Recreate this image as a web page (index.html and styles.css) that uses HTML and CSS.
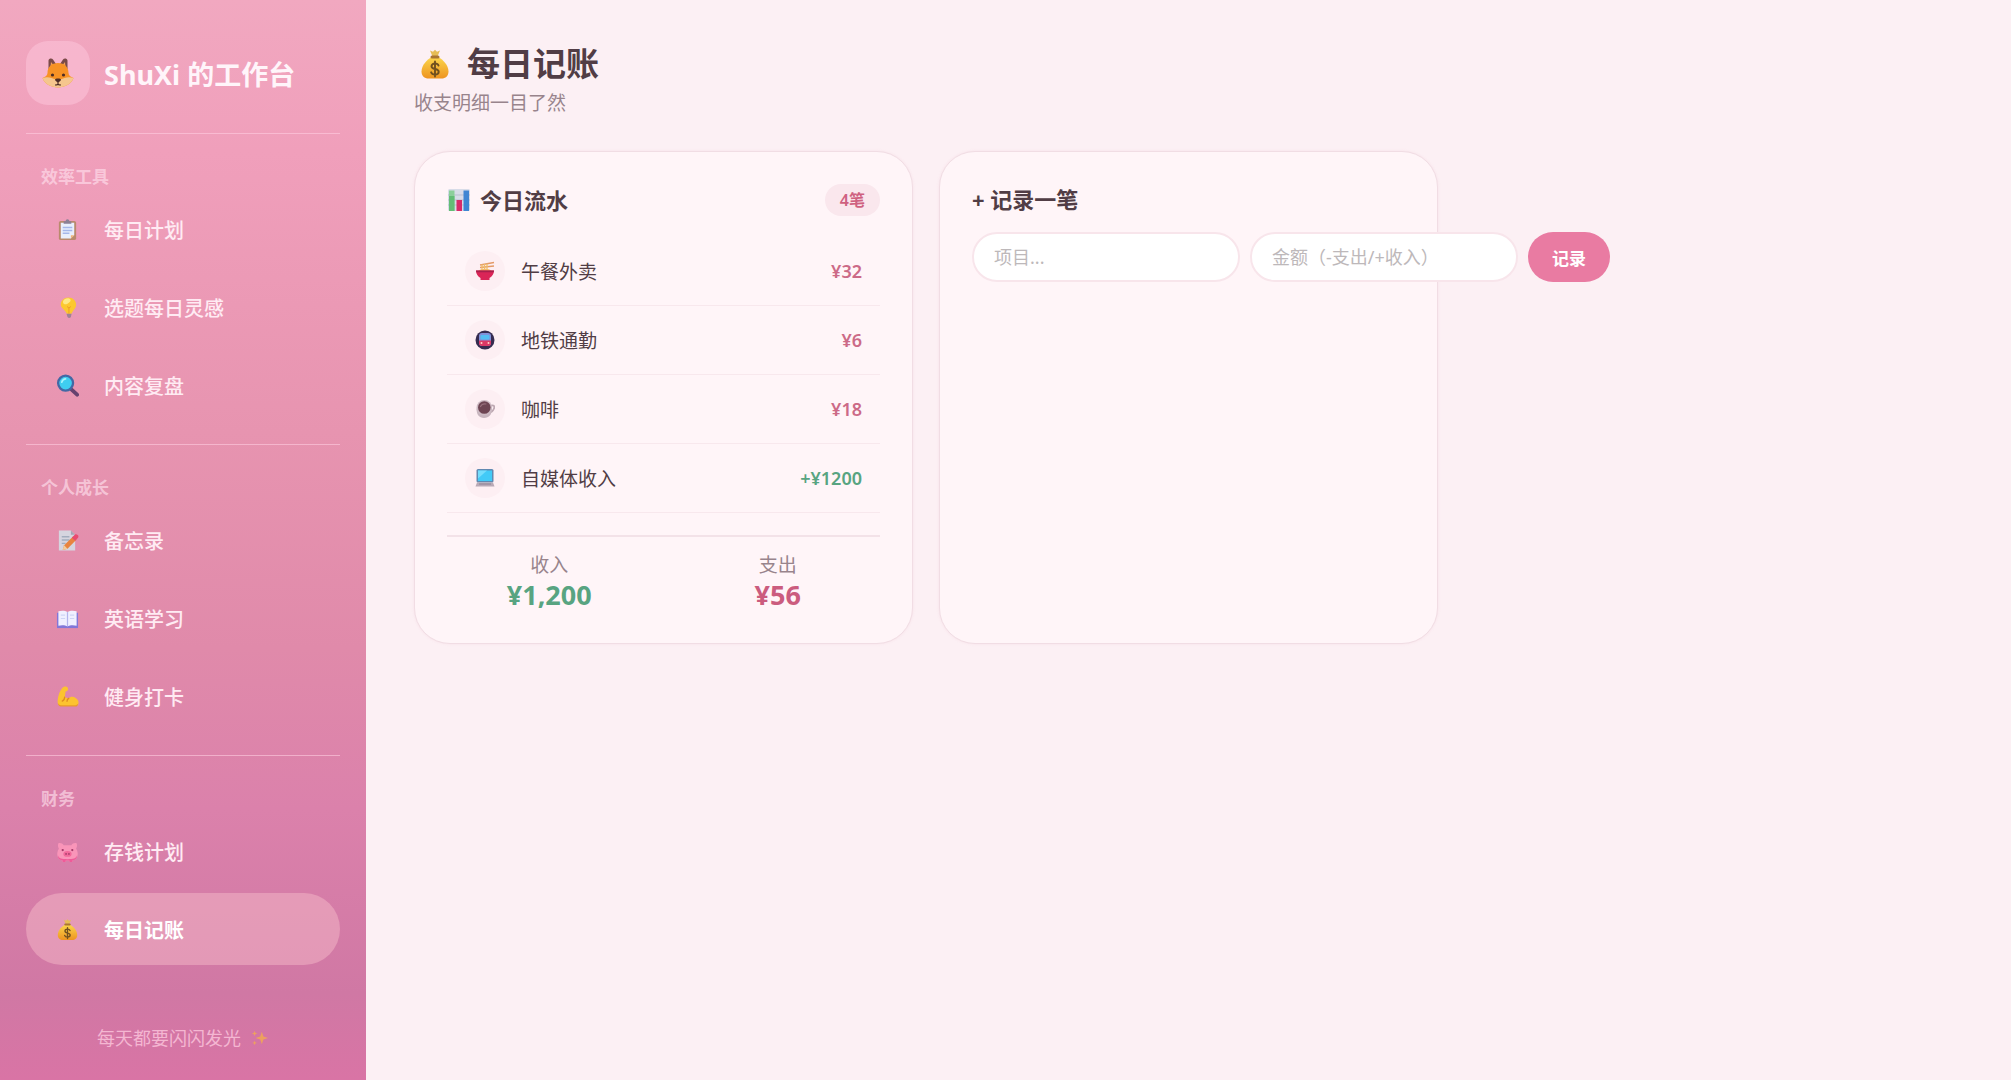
FILE: index.html
```html
<!DOCTYPE html>
<html lang="zh-CN">
<head>
  <meta charset="UTF-8">
  <meta name="viewport" content="width=device-width, initial-scale=1.0">
  <title>ShuXi 的工作台</title>
  <link rel="stylesheet" href="styles.css">
</head>
<body>

  <!-- Shared icon -->
  <svg class="sprite" width="0" height="0" aria-hidden="true">
    <defs>
      <linearGradient id="gold" x1="0" y1="0" x2="0" y2="1">
        <stop offset="0" stop-color="#fbd64c"/>
        <stop offset="1" stop-color="#ee9420"/>
      </linearGradient>
    </defs>
    <symbol id="moneybag" viewBox="0 0 32 32">
      <path d="M11 2.500l3 1.300 2-2 2 2 3-1.300-2.500 6h-5z" fill="#e6bd55"/>
      <path d="M12.500 9C8 12 2.500 17 2.500 23.500c0 4.500 3 7 7 7h13c4 0 7-2.500 7-7C29.500 17 24 12 19.500 9z" fill="url(#gold)"/>
      <rect x="11.500" y="7.500" width="9" height="3" rx="1.500" fill="#a87532"/>
      <path d="M19.500 17.500c-.5-1.500-1.800-2-3.500-2-2 0-3.500 1-3.500 2.700 0 4 7.200 1.600 7.200 5.600 0 1.800-1.600 2.800-3.700 2.800-2 0-3.400-.8-3.900-2.300M16 13.500v15" fill="none" stroke="#70501f" stroke-width="1.900" stroke-linecap="round"/>
    </symbol>
  </svg>

  <div class="layout">

    <!-- Sidebar -->
    <aside class="sidebar">
      <div class="brand">
        <div class="brand-logo">
          <svg viewBox="0 0 32 32" width="32" height="32" aria-hidden="true">
            <path d="M6.500 12L6.500 3.500C7 1 10 1 11 2.500l4 6zM25.500 12L25.500 3.500C25 1 22 1 21 2.500l-4 6z" fill="#7a4a48"/>
            <path d="M8.500 10l.5-5 3.200 4zM23.500 10l-.5-5-3.200 4z" fill="#f2a05c"/>
            <path d="M16 6c6.500 0 10.500 4 10.500 10 0 2 2 4 5 5-2 6-9 9.500-15.500 9.500S2.500 27 .5 21c3-1 5-3 5-5 0-6 4-10 10.500-10z" fill="#f79225"/>
            <path d="M.5 21c3-1 6-1 9 0 3 1 4.500 1.500 6.500 1.500s3.500-.5 6.500-1.500c3-1 6-1 9 0-2 6-9 9.500-15.500 9.500S2.500 27 .5 21z" fill="#f5c68e"/>
            <circle cx="10.500" cy="18" r="1.600" fill="#4d2c25"/>
            <circle cx="21.500" cy="18" r="1.600" fill="#4d2c25"/>
            <path d="M13 22.500c0-1.500 6-1.500 6 0 0 1.300-1.800 2.700-3 2.700s-3-1.400-3-2.700z" fill="#4d2c25"/>
            <path d="M16 25v2m-3 1c1.500 0 3-.4 3-1.300 0 .9 1.500 1.300 3 1.300" fill="none" stroke="#4d2c25" stroke-width="1.200"/>
          </svg>
        </div>
        <span class="brand-name">ShuXi 的工作台</span>
      </div>

      <nav>
        <div class="nav-section">
          <div class="nav-label">效率工具</div>
          <a href="#" class="nav-item">
            <svg class="nav-icon" viewBox="0 0 24 24" aria-hidden="true">
              <rect x="3" y="3" width="18" height="20" rx="2" fill="#b98a6c"/>
              <path d="M5 5h14v13l-3.500 3.500H5z" fill="#e9effc"/>
              <path d="M19 18h-3.500v3.500z" fill="#f0b375"/>
              <path d="M7 10h10M7 13h10M7 16h7" stroke="#a5b7ea" stroke-width="1.500"/>
              <path d="M8 6V3.500h2c0-3 4-3 4 0h2V6z" fill="#8b8095"/>
            </svg>
            每日计划
          </a>
          <a href="#" class="nav-item">
            <svg class="nav-icon" viewBox="0 0 24 24" aria-hidden="true">
              <path d="M13 1.500c4.800 0 8 3.400 8 7.600 0 3.600-2.800 5-4.800 9.400h-4.900C9.500 14 5 12.500 5 9c0-4.200 3.300-7.500 8-7.500z" fill="#fcc82f"/>
              <path d="M9 3.500c2-1.500 5-1.300 6 .2s-1 3.300-3 4.300-4 .5-4.500-.8S7.500 4.600 9 3.500z" fill="#fee886"/>
              <path d="M11 18.500h5.300l-.8 3.500c-.8 1.300-2.700 1.300-3.500 0z" fill="#a18294"/>
              <path d="M11.500 11l2 1.500 2-1.500M13.500 12.500v6" fill="none" stroke="#ee9c25" stroke-width="1"/>
            </svg>
            选题每日灵感
          </a>
          <a href="#" class="nav-item">
            <svg class="nav-icon" viewBox="0 0 24 24" aria-hidden="true">
              <path d="M16 16l6 5.500" stroke="#67416f" stroke-width="4" stroke-linecap="round"/>
              <circle cx="10" cy="9.500" r="7.800" fill="#3fcdf0" stroke="#4368a4" stroke-width="2.400"/>
              <path d="M6 8.500c.6-2 2-3.200 4-3.400" fill="none" stroke="#a8f3fc" stroke-width="1.700" stroke-linecap="round"/>
            </svg>
            内容复盘
          </a>
        </div>

        <div class="nav-section">
          <div class="nav-label">个人成长</div>
          <a href="#" class="nav-item">
            <svg class="nav-icon" viewBox="0 0 24 24" aria-hidden="true">
              <path d="M3 1.500h12.500L20 6v16.500H3z" fill="#d6d5df"/>
              <path d="M15.500 1.500V6H20z" fill="#a7a5b5"/>
              <path d="M6 8h8M6 11.500h8M6 15h4" stroke="#a3adbe" stroke-width="1.500"/>
              <path d="M7 22l1.500-5L18 7.500l3.500 3.500-9.500 9.500z" fill="#e8843f"/>
              <path d="M16.500 9l3-3c2-1.500 5 1 3.500 3l-3 3.200z" fill="#e94b70"/>
              <path d="M7 22l1.500-5 3.500 3.500z" fill="#f2ce9d"/>
            </svg>
            备忘录
          </a>
          <a href="#" class="nav-item">
            <svg class="nav-icon" viewBox="0 0 24 24" aria-hidden="true">
              <path d="M1 6h22v16H1z" fill="#8277d8"/>
              <path d="M2.500 4.500c3-1 7-1 9.500.8 2.500-1.800 6.500-1.800 9.500-.8v15c-3-.8-7-.8-9.500.7-2.500-1.500-6.500-1.500-9.500-.7z" fill="#f0f0ff"/>
              <path d="M12 5.300v14.900" stroke="#b2b4ec" stroke-width="1.300"/>
              <path d="M5 8.500h4.500M5 12h4.500M14.500 8.500H19M14.500 12H19" stroke="#ced5f6" stroke-width="1.200"/>
            </svg>
            英语学习
          </a>
          <a href="#" class="nav-item">
            <svg class="nav-icon" viewBox="0 0 24 24" aria-hidden="true">
              <path d="M7 2.500C9 1 12 1.700 12.500 3.500c.4 1.700-.7 3-2.500 3.200l-.8 5.800c1.500.8 3 1.500 4 1.500 2.500-3.500 8.300-1.500 10 2.500 1 3-.3 5.500-3.200 5.500H6c-3 0-4.500-2-4.300-4.800C2 11.500 4 5.500 7 2.500z" fill="#fcc32f"/>
              <path d="M9 12.800c0 2-1 3.400-2.500 4M13.200 14c-1.200.8-1.700 1.800-1.700 3" fill="none" stroke="#e08b22" stroke-width="1.400" stroke-linecap="round"/>
              <path d="M2 19c1 2 3 2 5 2h12c2 0 3.500-.5 4.200-1.800 0 2-1.300 3.300-3.200 3.300H6c-2.300 0-3.800-1.300-4-3.500z" fill="#e99a2b"/>
            </svg>
            健身打卡
          </a>
        </div>

        <div class="nav-section">
          <div class="nav-label">财务</div>
          <a href="#" class="nav-item">
            <svg class="nav-icon" viewBox="0 0 24 24" aria-hidden="true">
              <path d="M2.500 3.500C4 2.500 7 3.500 8 5.500h8c1-2 4-3 5.500-2 .8 2 .5 4-.5 5.500 1.500 2 2 5 1.500 7.500-.6 3-3 4.800-5.500 5V23h-3v-1.500h-4V23H7v-1.500c-3-.4-5-2.300-5.500-5-.5-2.500 0-5.500 1.500-7.500-1-1.500-1.300-3.500-.5-5.500z" fill="#f995b9"/>
              <path d="M2 16c1 3.500 4 4 10 4s9-.5 10-4c.2 3.500-2 5.200-5 5.500V23h-3v-1.500h-4V23H7v-1.500c-3-.3-5.200-2-5-5.500z" fill="#ef5b99"/>
              <ellipse cx="12" cy="14.500" rx="4.300" ry="3.100" fill="#f2689b"/>
              <circle cx="10.500" cy="14.500" r=".9" fill="#a33a68"/>
              <circle cx="13.500" cy="14.500" r=".9" fill="#a33a68"/>
              <circle cx="7" cy="10.500" r="1.200" fill="#a33a68"/>
              <circle cx="17" cy="10.500" r="1.200" fill="#a33a68"/>
            </svg>
            存钱计划
          </a>
          <a href="#" class="nav-item active" aria-current="page">
            <svg class="nav-icon" aria-hidden="true"><use href="#moneybag"/></svg>
            每日记账
          </a>
        </div>
      </nav>

      <div class="sidebar-footer">
        每天都要闪闪发光
        <svg viewBox="0 0 20 20" width="18" height="18" aria-hidden="true">
          <path d="M12 3l1.800 5.200L19 10l-5.200 1.800L12 17l-1.800-5.200L5 10l5.200-1.800zM4 2l.8 2.200L7 5l-2.200.8L4 8l-.8-2.200L1 5l2.200-.8zM4 13l.7 1.800 1.800.7-1.800.7L4 18l-.7-1.800-1.800-.7 1.800-.7z" fill="#eda05f"/>
        </svg>
      </div>
    </aside>

    <!-- Main content -->
    <main class="main">
      <header class="page-header">
        <h1>
          <svg class="title-icon" aria-hidden="true"><use href="#moneybag"/></svg>
          每日记账
        </h1>
        <p>收支明细一目了然</p>
      </header>

      <div class="card-grid">
        <section class="card">
          <div class="card-header">
            <h2>
              <svg viewBox="0 0 24 24" width="24" height="24" aria-hidden="true">
                <rect x="1" y="1" width="22" height="22" rx="1.500" fill="#d8dce8"/>
                <path d="M1 7h22M1 12h22M1 17h22" stroke="#b9bfd0" stroke-width="1"/>
                <rect x="2" y="2.500" width="5.500" height="20.500" fill="#8ccf9b"/>
                <rect x="2" y="8" width="5.500" height="15" fill="#63bd76"/>
                <rect x="9.500" y="12" width="5.500" height="11" fill="#d92b68"/>
                <rect x="16.500" y="2.500" width="5.500" height="20.500" fill="#3f86d3"/>
              </svg>
              今日流水
            </h2>
            <span class="badge">4笔</span>
          </div>

          <ul class="record-list">
            <li>
              <span class="record-icon">
                <svg viewBox="0 0 20 20" width="20" height="20" aria-hidden="true">
                  <path d="M5 4l14-2.500M5 6.500L19 5" stroke="#e39a68" stroke-width="1.300"/>
                  <path d="M7 3.500v7M9.500 3v7M12 2.800v7" stroke="#f1bf68" stroke-width="1.300"/>
                  <path d="M3.500 10c2-3 11-3 13 0z" fill="#f3bb6b"/>
                  <path d="M1 9.500h18c0 3.500-2 6-4.500 7.500v2h-9v-2C3 15.500 1 13 1 9.500z" fill="#da2557"/>
                  <path d="M1 9.500h18l-.2 1.700H1.200z" fill="#a8204c"/>
                </svg>
              </span>
              <span class="record-name">午餐外卖</span>
              <span class="amount">¥32</span>
            </li>
            <li>
              <span class="record-icon">
                <svg viewBox="0 0 20 20" width="20" height="20" aria-hidden="true">
                  <circle cx="10" cy="10" r="9.500" fill="#352b50"/>
                  <rect x="4" y="3" width="12" height="13" rx="3" fill="#8290d8"/>
                  <rect x="5.500" y="5" width="9" height="4.500" rx="1" fill="#54bdf3"/>
                  <path d="M4 10.500h12V13c0 2-1 3-3 3H7c-2 0-3-1-3-3z" fill="#da3865"/>
                  <circle cx="6.500" cy="13" r="1" fill="#ffd3c8"/>
                  <circle cx="13.500" cy="13" r="1" fill="#ffd3c8"/>
                </svg>
              </span>
              <span class="record-name">地铁通勤</span>
              <span class="amount">¥6</span>
            </li>
            <li>
              <span class="record-icon">
                <svg viewBox="0 0 20 20" width="20" height="20" aria-hidden="true">
                  <path d="M15.500 7c3-1.500 4.500 0 3.500 2.500s-3 4-5 4" fill="none" stroke="#bda8b2" stroke-width="1.800"/>
                  <path d="M1.500 9.500c0 6 2.500 9.500 7.500 9.500s8-3.500 8-9.500z" fill="#c7b5be"/>
                  <circle cx="9.300" cy="8.800" r="7.800" fill="#cdbbc4"/>
                  <circle cx="9.300" cy="8.500" r="6.300" fill="#6d4553"/>
                  <path d="M5.500 7.500c1-2 3-3 5.500-2.500" fill="none" stroke="#96707c" stroke-width="1.200" stroke-linecap="round"/>
                </svg>
              </span>
              <span class="record-name">咖啡</span>
              <span class="amount">¥18</span>
            </li>
            <li>
              <span class="record-icon">
                <svg viewBox="0 0 20 20" width="20" height="20" aria-hidden="true">
                  <rect x="1.500" y="1" width="17" height="13.500" rx="1.500" fill="#6189b1"/>
                  <rect x="3" y="2.500" width="14" height="10.500" fill="#42caf7"/>
                  <path d="M3 2.500h9l-9 8z" fill="#75ddfc"/>
                  <path d="M2 14.500h16l1.500 4H.5z" fill="#b8a9b6"/>
                  <path d="M4 16h12" stroke="#8c8295" stroke-width="1"/>
                </svg>
              </span>
              <span class="record-name">自媒体收入</span>
              <span class="amount income">+¥1200</span>
            </li>
          </ul>

          <div class="summary">
            <div>
              <div class="summary-label">收入</div>
              <div class="summary-value income">¥1,200</div>
            </div>
            <div>
              <div class="summary-label">支出</div>
              <div class="summary-value">¥56</div>
            </div>
          </div>
        </section>

        <section class="card">
          <h2 class="form-title">+ 记录一笔</h2>
          <form class="record-form">
            <input type="text" aria-label="项目" placeholder="项目...">
            <input type="text" aria-label="金额" placeholder="金额（-支出/+收入）">
            <button type="button">记录</button>
          </form>
        </section>
      </div>
    </main>

  </div>

</body>
</html>
```
FILE: styles.css
```css
* {
  box-sizing: border-box;
  margin: 0;
  padding: 0;
}

body {
  font-family: "Noto Sans", "Noto Sans CJK SC", sans-serif;
  background: #fcf0f4;
  color: #513d45;
}

.sprite {
  display: block;
}

.layout {
  display: flex;
  min-height: 100vh;
}

/* Sidebar */
.sidebar {
  width: 366px;
  flex-shrink: 0;
  display: flex;
  flex-direction: column;
  padding: 41px 26px 28px;
  background: linear-gradient(180deg, #f1a8c0 0%, #f09fbb 14%, #e794b0 40%, #e08aaa 60%, #db81ab 75%, #d078a4 92%, #d974a5 100%);
}

.brand {
  display: flex;
  align-items: center;
  gap: 14px;
  padding-bottom: 28px;
}

.brand-logo {
  width: 64px;
  height: 64px;
  display: flex;
  align-items: center;
  justify-content: center;
  background: rgba(255, 205, 225, 0.45);
  border-radius: 22px;
}

.brand-name {
  padding-top: 4px;
  font-size: 27px;
  line-height: 36px;
  font-weight: 700;
  color: #fff5fa;
}

.nav-section {
  display: flex;
  flex-direction: column;
  gap: 6px;
  padding: 33px 0 23px;
  border-top: 1px solid rgba(255, 205, 225, 0.6);
}

.nav-label {
  padding-left: 15px;
  font-size: 17px;
  line-height: 20px;
  font-weight: 700;
  color: rgba(255, 225, 238, 0.65);
}

.nav-item {
  display: flex;
  align-items: center;
  gap: 25px;
  height: 72px;
  padding: 0 30px;
  border-radius: 36px;
  font-size: 20px;
  font-weight: 500;
  color: #ffebf3;
  text-decoration: none;
}

.nav-item:hover {
  background: rgba(255, 205, 210, 0.15);
}

.nav-item.active {
  background: rgba(255, 205, 210, 0.38);
  color: #fff;
  font-weight: 700;
}

.nav-icon {
  width: 23px;
  height: 23px;
}

.sidebar-footer {
  display: flex;
  align-items: center;
  justify-content: center;
  gap: 10px;
  margin-top: auto;
  font-size: 18px;
  line-height: 28px;
  color: rgba(255, 205, 225, 0.75);
}

/* Main content */
.main {
  flex: 1;
  min-width: 0;
  padding: 39px 48px;
}

.page-header {
  margin-bottom: 34px;
}

.page-header h1 {
  display: flex;
  align-items: center;
  gap: 16px;
  padding-left: 5px;
  font-size: 33px;
  line-height: 50px;
}

.title-icon {
  width: 32px;
  height: 32px;
}

.page-header p {
  font-size: 19px;
  line-height: 28px;
  color: #98848c;
}

.card-grid {
  display: grid;
  grid-template-columns: repeat(2, minmax(0, 1fr));
  gap: 26px;
  max-width: 1024px;
}

.card {
  padding: 32px;
  background: #fff5f8;
  border: 1px solid #f1dde4;
  border-radius: 36px;
  box-shadow: 0 0 3px rgba(220, 150, 175, 0.15);
}

.card h2 {
  font-size: 22px;
  line-height: 30px;
}

.card-header {
  display: flex;
  align-items: center;
  justify-content: space-between;
  margin-bottom: 21px;
}

.card-header h2 {
  display: flex;
  align-items: center;
  gap: 9px;
}

.badge {
  padding: 3px 15px;
  background: #fae7ed;
  border-radius: 16px;
  font-size: 16px;
  line-height: 26px;
  font-weight: 600;
  color: #cf6180;
}

.record-list {
  list-style: none;
}

.record-list li {
  display: flex;
  align-items: center;
  gap: 16px;
  height: 69px;
  padding: 0 18px;
  border-bottom: 1px solid #f8e8ed;
}

.record-icon {
  width: 40px;
  height: 40px;
  display: flex;
  align-items: center;
  justify-content: center;
  background: #fdeff3;
  border-radius: 50%;
}

.record-name {
  flex: 1;
  font-size: 19px;
}

.amount {
  font-size: 18px;
  font-weight: 600;
  color: #cc6a87;
}

.summary {
  display: grid;
  grid-template-columns: 1fr 1fr;
  gap: 24px;
  margin-top: 22px;
  padding-top: 14px;
  border-top: 2px solid #f3e2e8;
  text-align: center;
}

.summary-label {
  font-size: 19px;
  line-height: 28px;
  color: #98848c;
}

.summary-value {
  font-size: 27px;
  line-height: 32px;
  font-weight: 700;
  color: #cb5c7e;
}

.amount.income,
.summary-value.income {
  color: #58a481;
}

/* Record form */
.form-title {
  margin-bottom: 18px;
}

.record-form {
  display: flex;
  gap: 10px;
}

.record-form input {
  width: 268px;
  flex-shrink: 0;
  height: 50px;
  padding: 0 20px;
  background: #fff;
  border: 2px solid #f8e5eb;
  border-radius: 25px;
  font-family: inherit;
  font-size: 18px;
  color: #513d45;
  outline-color: #e97ba2;
}

.record-form input::placeholder {
  color: #bdb8ba;
}

.record-form button {
  flex-shrink: 0;
  height: 50px;
  padding: 0 24px;
  background: #e97ba2;
  border: none;
  border-radius: 25px;
  font-family: inherit;
  font-size: 17px;
  font-weight: 700;
  color: #fff;
  cursor: pointer;
}

.record-form button:hover {
  background: #e06b95;
}
```
